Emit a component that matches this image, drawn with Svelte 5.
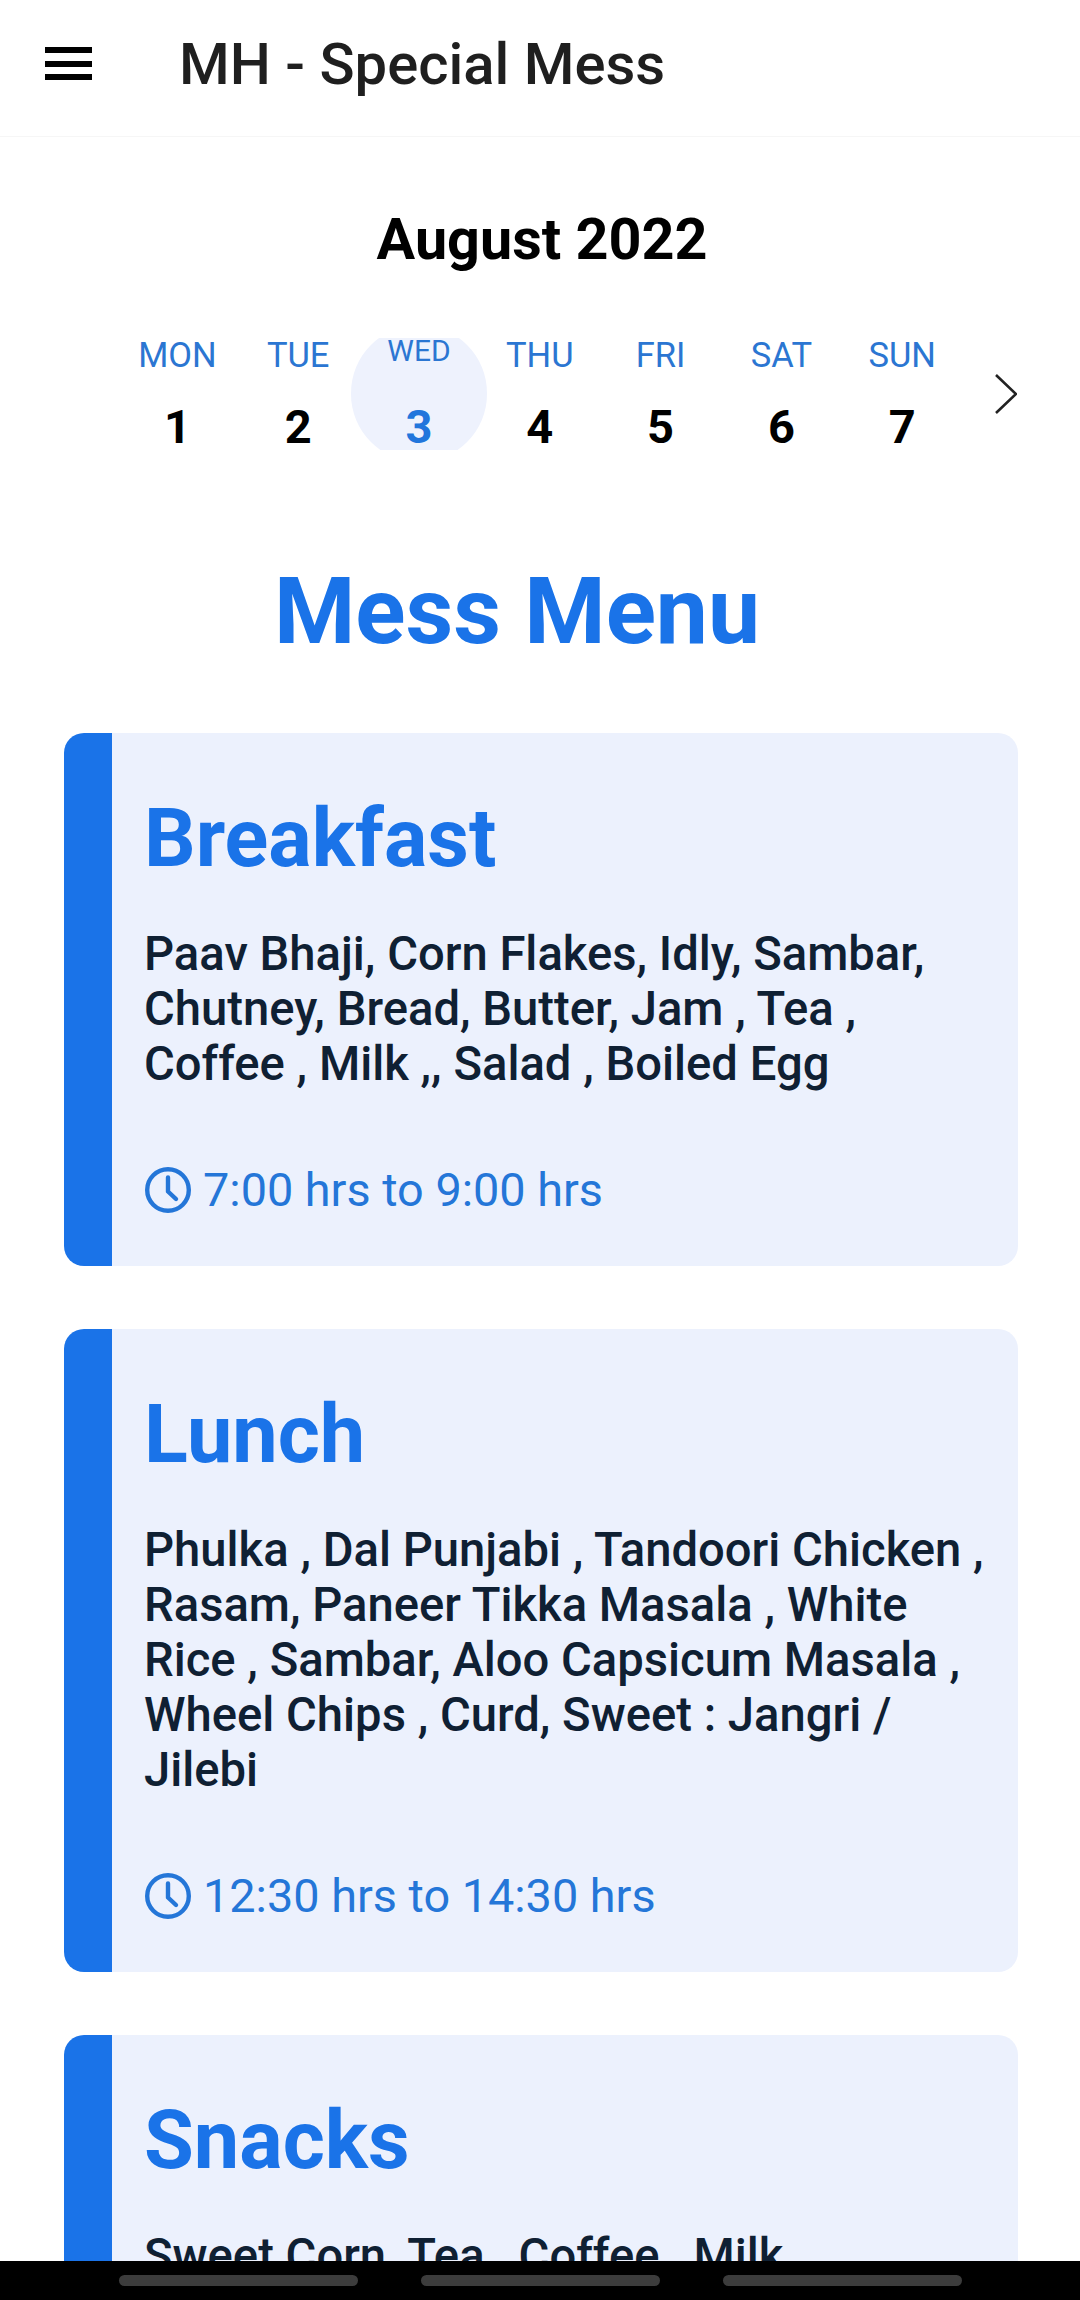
<script>
  const days = [
    { name: 'MON', num: 1 },
    { name: 'TUE', num: 2 },
    { name: 'WED', num: 3, active: true },
    { name: 'THU', num: 4 },
    { name: 'FRI', num: 5 },
    { name: 'SAT', num: 6 },
    { name: 'SUN', num: 7 }
  ];

  const meals = [
    {
      title: 'Breakfast',
      items: 'Paav Bhaji, Corn Flakes, Idly, Sambar, Chutney, Bread, Butter, Jam , Tea , Coffee , Milk ,, Salad , Boiled Egg',
      time: '7:00 hrs to 9:00 hrs'
    },
    {
      title: 'Lunch',
      items: 'Phulka , Dal Punjabi , Tandoori Chicken , Rasam, Paneer Tikka Masala , White Rice , Sambar, Aloo Capsicum Masala , Wheel Chips , Curd, Sweet : Jangri / Jilebi',
      time: '12:30 hrs to 14:30 hrs'
    },
    {
      title: 'Snacks',
      items: 'Sweet Corn, Tea , Coffee , Milk',
      time: '16:30 hrs to 18:00 hrs'
    }
  ];
</script>

<div class="screen">
  <header class="topbar">
    <button class="menu-btn" aria-label="Menu">
      <span></span><span></span><span></span>
    </button>
    <h1>MH - Special Mess</h1>
  </header>

  <main class="content">
    <section class="calendar">
      <h2 class="month">August 2022</h2>
      <div class="week">
        <div class="days">
          {#each days as day}
            <div class="day" class:active={day.active}>
              <span class="day-name">{day.name}</span>
              <span class="day-num">{day.num}</span>
            </div>
          {/each}
        </div>
        <svg class="chevron" viewBox="0 0 22 40" width="22" height="40" fill="none" stroke="#222" stroke-width="2.6">
          <path d="M1 1 L21 20 L1 39" />
        </svg>
      </div>
    </section>

    <h2 class="menu-title">Mess Menu</h2>

    <div class="cards">
      {#each meals as meal}
        <article class="card">
          <h3>{meal.title}</h3>
          <p class="items">{meal.items}</p>
          <div class="time">
            <svg viewBox="0 0 46 46" width="46" height="46" fill="none" stroke="#2476d8" stroke-width="4.4" stroke-linecap="round" stroke-linejoin="round">
              <circle cx="23" cy="23" r="20.8" />
              <path d="M23 10.5 V24.5 L31 32" />
            </svg>
            <span>{meal.time}</span>
          </div>
        </article>
      {/each}
    </div>
  </main>

  <nav class="navbar">
    <span></span><span></span><span></span>
  </nav>
</div>

<style>
  :global(body) {
    margin: 0;
    background: #fff;
  }

  .screen {
    width: 1080px;
    height: 2300px;
    display: flex;
    flex-direction: column;
    overflow: hidden;
    font-family: Roboto, "Liberation Sans", sans-serif;
  }

  .topbar {
    height: 137px;
    flex: none;
    box-sizing: border-box;
    display: flex;
    align-items: center;
    padding: 0 0 9px 45px;
    border-bottom: 1px solid #f6f6f6;
  }

  .menu-btn {
    width: 47px;
    height: 33px;
    padding: 0;
    border: 0;
    background: none;
    display: flex;
    flex-direction: column;
    justify-content: space-between;
  }

  .menu-btn span {
    display: block;
    height: 6px;
    background: #000;
  }

  h1 {
    margin: 0 0 0 87px;
    font-size: 58px;
    font-weight: 500;
    color: #1f1f1f;
  }

  .content {
    flex: 1;
    min-height: 0;
    overflow: hidden;
  }

  .calendar {
    padding-top: 70px;
  }

  .month {
    margin: 0;
    text-align: center;
    font-size: 57.5px;
    font-weight: 700;
    line-height: 66px;
    color: #000;
    transform: translateX(2px);
  }

  .week {
    margin-top: 65px;
    display: flex;
    align-items: center;
    padding-left: 117px;
  }

  .days {
    display: flex;
    height: 112px;
  }

  .day {
    width: 120.8px;
    display: flex;
    flex-direction: column;
    align-items: center;
    position: relative;
    z-index: 0;
  }

  .day.active::before {
    content: "";
    position: absolute;
    z-index: -1;
    left: -8px;
    right: -8px;
    top: -13px;
    height: 137px;
    border-radius: 50%;
    background: #eef2fd;
    clip-path: inset(13px 0 12px 0);
  }

  .day-name {
    font-size: 34.5px;
    line-height: 40px;
    margin-top: -3px;
    color: #2b76d2;
  }

  .day-num {
    font-size: 47px;
    font-weight: 700;
    line-height: 54px;
    margin-top: 25px;
    color: #000;
  }

  .active .day-name {
    font-size: 30px;
    line-height: 36px;
    margin-top: -5px;
  }

  .active .day-num {
    margin-top: 31px;
    color: #2276dc;
  }

  .chevron {
    margin-left: 32px;
  }

  .menu-title {
    margin: 106px 0 0;
    padding-right: 46px;
    text-align: center;
    font-size: 93px;
    line-height: 112px;
    font-weight: 700;
    color: #1a73e8;
  }

  .cards {
    margin-top: 65px;
    padding: 0 62px 0 64px;
    display: flex;
    flex-direction: column;
    gap: 63px;
  }

  .card {
    box-sizing: border-box;
    background: #ecf1fd;
    border-left: 48px solid #1a73e8;
    border-radius: 20px;
    padding: 59px 26px 48px 32px;
  }

  h3 {
    margin: 0;
    font-size: 81px;
    line-height: 94px;
    font-weight: 700;
    color: #1a73e8;
  }

  .items {
    margin: 41px 0 0;
    font-size: 47.2px;
    line-height: 55px;
    font-weight: 500;
    color: #0f2033;
  }

  .time {
    margin-top: 70px;
    display: flex;
    align-items: center;
    gap: 12px;
    font-size: 46.8px;
    line-height: 56px;
    color: #2476d8;
    padding-left: 1px;
  }

  .navbar {
    height: 39px;
    flex: none;
    background: #000;
    display: flex;
    justify-content: center;
    gap: 63px;
    padding-top: 14px;
    box-sizing: border-box;
  }

  .navbar span {
    width: 239px;
    height: 11px;
    border-radius: 6px;
    background: #3c3c3c;
  }
</style>
